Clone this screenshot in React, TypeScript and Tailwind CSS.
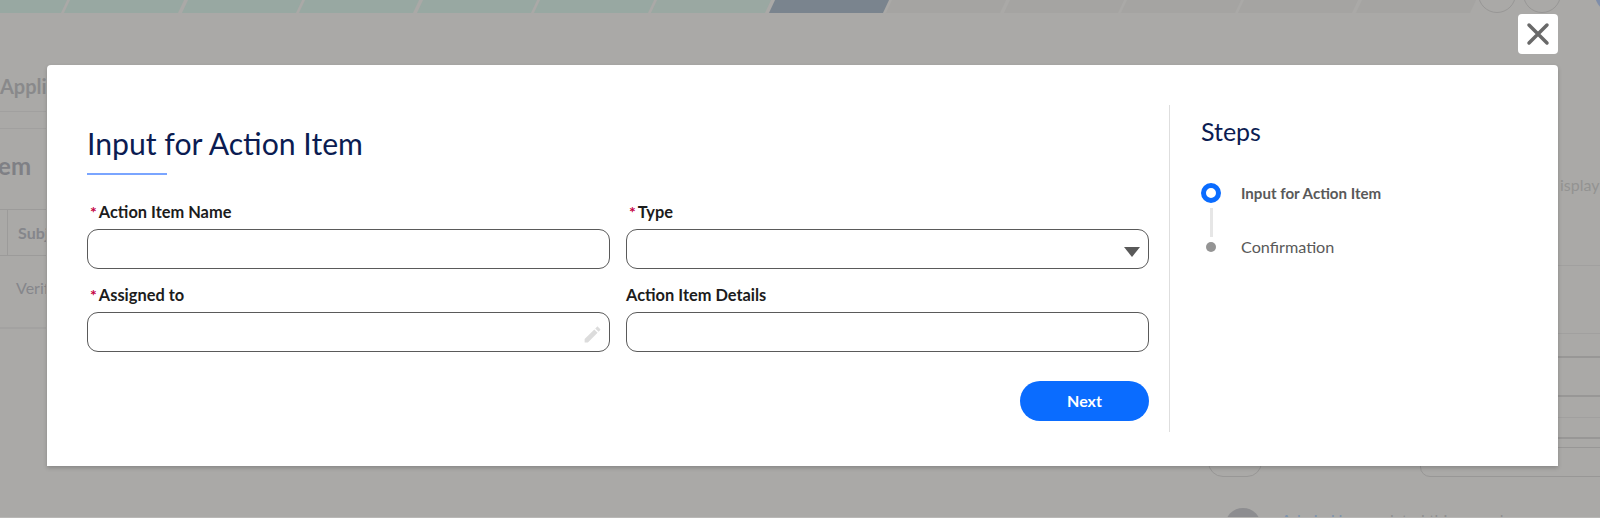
import React from 'react';

const GREEN_SEGMENTS = [0, 1, 2, 3, 4, 5];
const GREY_SEGMENTS = [0, 1, 2, 3, 4];

const Segment: React.FC<{ className: string }> = ({ className }) => (
  <div className={`h-full w-[114px] shrink-0 -skew-x-[25deg] ${className}`} />
);

const Label: React.FC<{ text: string; required?: boolean }> = ({ text, required }) => (
  <label className="mb-[7px] block h-5 text-[16.4px] leading-5 font-bold text-[#1c1c1c]">
    {required && <span className="ml-[3px] mr-[2px] text-[16px] text-[#c4003f]">*</span>}
    {text}
  </label>
);

const inputClass = 'h-10 w-full rounded-[11px] border border-[#5a5a5a] bg-white px-3 text-[15px] outline-none';

const App: React.FC = () => {
  return (
    <div className="relative h-[518px] w-[1600px] overflow-hidden bg-[#aaa9a7] font-[Lato,sans-serif]">
      {/* Page behind the dialog */}
      <div className="h-[13px] overflow-hidden">
        <div className="-ml-[50px] flex h-full gap-[3.4px]">
          {GREEN_SEGMENTS.map((i) => (
            <Segment key={i} className="bg-[#98a8a2]" />
          ))}
          <Segment className="bg-[#9aa8a2]" />
          <Segment className="bg-[#7a848e]" />
          {GREY_SEGMENTS.map((i) => (
            <Segment key={i} className="bg-[#a5a4a2]" />
          ))}
        </div>
      </div>

      <div className="flex justify-between">
        <div className="w-[46px] overflow-hidden">
          <div className="mt-[60px] w-[200px] text-[20px] leading-[26px] font-bold text-[#89898b]">Application</div>
          <div className="mt-[12px] w-[200px] border-t border-[#a1a09f]" />
          <div className="mt-[16px] w-[200px] border-t border-[#a1a09f]" />
          <div className="mt-[21px] flex w-[31px] justify-end whitespace-nowrap text-[24px] leading-[32px] font-bold text-[#7f8085]">Action Item</div>
          <div className="mt-[27px] flex h-[47px] w-[200px] items-center border-y border-[#9c9b9a] pl-[7px]">
            <div className="h-full border-l border-[#9c9b9a] pl-[10px] text-[16px] leading-[46px] font-bold text-[#85868b]">Subject</div>
          </div>
          <div className="w-[200px] pl-4 pt-[22px] text-[16px] leading-5 text-[#85868b]">Verify</div>
          <div className="mt-[29px] w-[200px] border-t-2 border-[#a3a2a1]" />
        </div>

        <div className="-mt-[13px] w-[420px]">
          <div className="ml-[298px] flex h-[26px] -translate-y-[25px] gap-[7px]">
            <div className="size-[38px] shrink-0 rounded-full border border-[#989796]" />
            <div className="size-[38px] shrink-0 rounded-full border border-[#989796]" />
            <div className="ml-[27px] size-[38px] shrink-0 rounded-full bg-[#7f8eaa]" />
          </div>
          <div className="ml-[380px] mt-[149px] h-5 overflow-hidden whitespace-nowrap text-[16px] leading-5 text-[#939392]">isplay</div>
          <div className="mt-[70px] border-t border-[#a1a09f]" />
          <div className="mt-[67px] border-t border-[#a1a09f]" />
          <div className="mt-[22px] border-t-2 border-[#989796]" />
          <div className="mt-[37px] border-t-2 border-[#989796]" />
          <div className="mt-[20px] border-t border-[#a1a09f]" />
          <div className="mt-[19px] border-t-2 border-[#989796]" />
          <div className="mt-[38px] flex h-0 justify-between">
            <div className="ml-[28px] h-[30px] w-[54px] -translate-y-[30px] rounded-[20px] border border-[#989796]" />
            <div className="-mr-[20px] h-[30px] w-[200px] -translate-y-[30px] rounded-[10px] border border-[#989796]" />
          </div>
          <div className="mt-[31px] flex items-start gap-5 pl-[45px]">
            <div className="size-[36px] shrink-0 rounded-full bg-[#8d8d90]" />
            <div className="whitespace-nowrap pt-[2px] text-[16px] leading-5 text-[#8f8f8f]">
              <span className="text-[#7d93ad]">Admin User</span> updated this record
            </div>
          </div>
        </div>
      </div>

      <div className="absolute bottom-0 h-px w-full bg-[#b9b8b6]" />

      {/* Dialog */}
      <div className="absolute inset-0 flex flex-col items-end pl-[47px] pr-[42px] pt-[14px]">
        <button className="flex size-10 items-center justify-center rounded-[4px] bg-white">
          <svg width="24" height="24" viewBox="0 0 24 24" fill="none" stroke="#696969" strokeWidth="3.5" strokeLinecap="round">
            <path d="M3 3l18 18M21 3L3 21" />
          </svg>
        </button>

        <div className="mt-[11px] flex h-[401px] w-full rounded-t-[4px] bg-white pb-[34px] pt-10 shadow-[0_2px_4px_rgba(0,0,0,0.2)]">
          <div className="w-[1123px] border-r border-[#dedede] pl-[40px] pr-5 pt-[20px]">
            <h1 className="text-[30.2px] leading-9 font-normal text-[#0b1c52]">Input for Action Item</h1>
            <div className="mt-[12px] h-[2px] w-20 bg-[#7aa5ff]" />

            <div className="mt-[27px] grid grid-cols-2 gap-x-4 gap-y-4">
              <div>
                <Label text="Action Item Name" required />
                <input className={inputClass} />
              </div>
              <div>
                <Label text="Type" required />
                <div className="relative">
                  <select className={`${inputClass} appearance-none`} />
                  <div className="absolute right-[9px] top-[18px] h-0 w-0 border-x-[8px] border-t-[10px] border-x-transparent border-t-[#595959]" />
                </div>
              </div>
              <div>
                <Label text="Assigned to" required />
                <div className="relative">
                  <input className={inputClass} />
                  <svg className="absolute right-[7px] top-[12px]" width="21" height="21" viewBox="0 0 24 24" fill="#dcdcdc">
                    <path d="M3 17.25V21h3.75L17.81 9.94l-3.75-3.75L3 17.25zM20.71 7.04c.39-.39.39-1.02 0-1.41l-2.34-2.34c-.39-.39-1.02-.39-1.41 0l-1.83 1.83 3.75 3.75 1.83-1.83z" />
                  </svg>
                </div>
              </div>
              <div>
                <Label text="Action Item Details" />
                <input className={inputClass} />
              </div>
            </div>

            <div className="mt-[29px] flex justify-end">
              <button className="h-10 w-[129px] rounded-full bg-[#0a6cff] text-[16px] font-bold text-white">Next</button>
            </div>
          </div>

          <div className="pl-[31px]">
            <h2 className="mt-[9px] text-[25px] leading-[34px] font-normal text-[#0b1c52]">Steps</h2>
            <div className="mt-[35px]">
              <div className="flex items-center gap-5">
                <div className="size-5 rounded-full border-[5px] border-[#0a6cff]" />
                <span className="text-[15.1px] leading-5 font-bold text-[#595959]">Input for Action Item</span>
              </div>
              <div className="ml-[8.5px] mt-[5px] h-[29px] w-[3px] bg-[#e6e6e6]" />
              <div className="flex items-center gap-5">
                <div className="mx-[5px] size-[10px] rounded-full bg-[#949494]" />
                <span className="text-[16.2px] leading-5 text-[#595959]">Confirmation</span>
              </div>
            </div>
          </div>
        </div>
      </div>
    </div>
  );
};

export default App;
